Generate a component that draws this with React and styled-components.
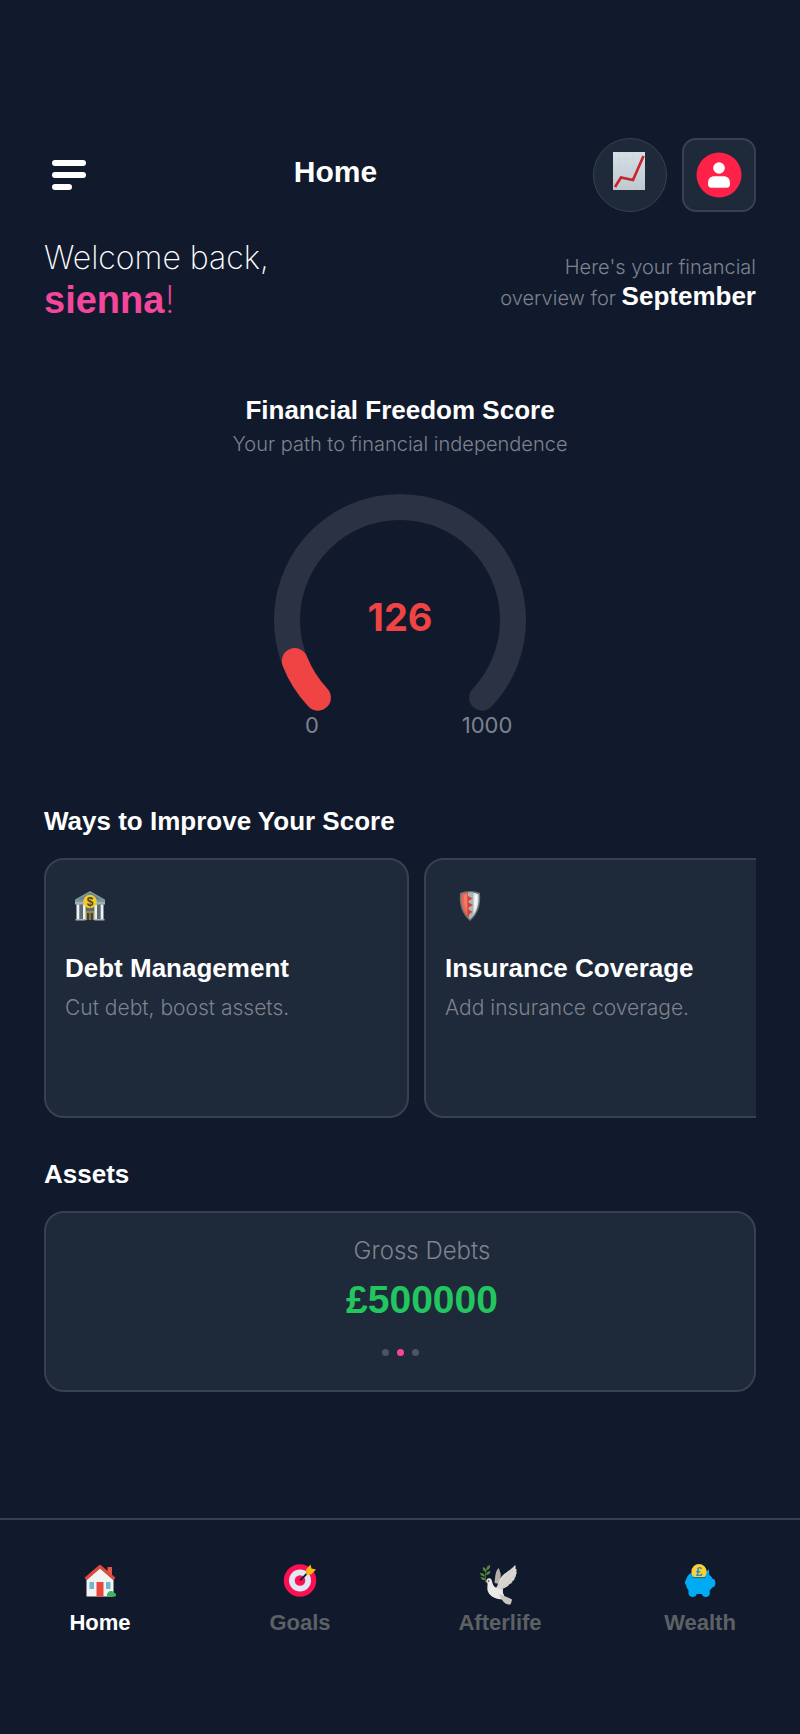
import React from 'react';
import styled, { createGlobalStyle } from 'styled-components';

const navy = '#111a2d';
const panel = '#1e293a';
const line = '#364152';
const textGray = '#7d828e';
const mutedGray = '#5e6163';
const pink = '#f4479b';
const red = '#f04444';
const green = '#22c55e';

const boldFont = "'Liberation Sans', Arial, sans-serif";
const lightFont = "Inter, 'Liberation Sans', sans-serif";

const GlobalStyle = createGlobalStyle`
  * {
    box-sizing: border-box;
  }

  body {
    margin: 0;
    background: ${navy};
    color: #fff;
    font-family: ${boldFont};
  }

  h1, h2, h3, p {
    margin: 0;
  }

  button {
    padding: 0;
    border: none;
    background: none;
    cursor: pointer;
  }
`;

const Page = styled.div`
  display: flex;
  flex-direction: column;
  min-height: 100vh;
`;

const Content = styled.main`
  padding: 138px 44px 40px;
`;

const Header = styled.header`
  display: flex;
  align-items: center;
`;

const MenuButton = styled.button`
  display: flex;
  padding-left: 8px;
`;

const PageTitle = styled.h1`
  flex: 1;
  padding: 0 8px 6px 0;
  font-size: 30px;
  line-height: 34px;
  text-align: center;
`;

const Actions = styled.div`
  display: flex;
  gap: 15px;
`;

const ActionButton = styled.button`
  display: flex;
  align-items: center;
  justify-content: center;
  width: 74px;
  height: 74px;
  border: ${({ $round }) => ($round ? '1px' : '2px')} solid ${line};
  border-radius: ${({ $round }) => ($round ? '50%' : '14px')};
  background: ${panel};
`;

const Welcome = styled.section`
  display: flex;
  align-items: center;
  justify-content: space-between;
  margin-top: 26px;
`;

const Greeting = styled.p`
  font-family: ${lightFont};
  font-size: 32px;
  font-weight: 200;
  line-height: 40px;
`;

const UserName = styled.p`
  font-family: ${lightFont};
  font-size: 38px;
  font-weight: 200;
  line-height: 42px;
  color: ${pink};

  strong {
    font-family: ${boldFont};
    font-weight: 700;
  }
`;

const Overview = styled.p`
  padding-top: 6px;
  font-family: ${lightFont};
  font-size: 20px;
  font-weight: 300;
  line-height: 29px;
  text-align: right;
  color: ${textGray};

  strong {
    font-family: ${boldFont};
    font-size: 26px;
    font-weight: 700;
    color: #fff;
  }
`;

const Score = styled.section`
  display: flex;
  flex-direction: column;
  align-items: center;
  margin-top: 72px;
`;

const Heading = styled.h2`
  font-size: 26px;
  line-height: 34px;
`;

const Subtitle = styled.p`
  margin-bottom: 33px;
  font-family: ${lightFont};
  font-size: 20px;
  font-weight: 300;
  line-height: 34px;
  color: ${textGray};
`;

const GaugeText = styled.text`
  font-family: Inter, sans-serif;
  font-size: 22px;
  text-anchor: middle;
  fill: ${textGray};
`;

const GaugeValue = styled(GaugeText)`
  font-size: 38px;
  font-weight: 700;
  fill: ${red};
`;

const Section = styled.section`
  display: flex;
  flex-direction: column;
  gap: 20px;
  margin-top: ${({ $space }) => $space};
`;

const CardRow = styled.div`
  display: flex;
  gap: 15px;
  overflow: hidden;
`;

const Card = styled.article`
  flex: 0 0 365px;
  min-height: 260px;
  padding: 21px 19px;
  border: 2px solid ${line};
  border-radius: 20px;
  background: ${panel};
`;

const CardIcon = styled.div`
  display: flex;
  align-items: center;
  justify-content: center;
  width: 50px;
  height: 50px;
  margin-bottom: 20px;
`;

const CardTitle = styled.h3`
  font-size: 26px;
  line-height: 34px;
`;

const CardText = styled.p`
  margin-top: 8px;
  font-family: ${lightFont};
  font-size: 21px;
  font-weight: 300;
  line-height: 30px;
  color: ${textGray};
`;

const Totals = styled.div`
  display: flex;
  flex-direction: column;
  align-items: center;
  padding: 21px 0 34px;
  border: 2px solid ${line};
  border-radius: 20px;
  background: ${panel};
`;

const Slide = styled.div`
  align-self: stretch;
  padding-left: 44px;
  text-align: center;
`;

const SlideLabel = styled.p`
  font-family: ${lightFont};
  font-size: 24px;
  font-weight: 300;
  line-height: 34px;
  color: ${textGray};
`;

const SlideValue = styled.p`
  margin-top: 10px;
  font-size: 39px;
  font-weight: 700;
  line-height: 44px;
  color: ${green};
`;

const Dots = styled.div`
  display: flex;
  gap: 8px;
  margin-top: 27px;
`;

const Dot = styled.button`
  width: 7px;
  height: 7px;
  border-radius: 50%;
  background: ${({ $active }) => ($active ? pink : '#4b5566')};
`;

const TabBar = styled.nav`
  display: flex;
  margin-top: auto;
  padding: 43px 0 97px;
  border-top: 2px solid ${line};
`;

const Tab = styled.a`
  display: flex;
  flex: 1;
  flex-direction: column;
  gap: 2px;
  align-items: center;
  font-size: 22px;
  font-weight: 700;
  line-height: 28px;
  text-decoration: none;
  color: ${({ $active }) => ($active ? '#fff' : mutedGray)};
`;

const CoinText = styled.text`
  font-family: ${boldFont};
  font-size: 12px;
  font-weight: 700;
  text-anchor: middle;
  fill: ${({ $fill }) => $fill};
`;

const MenuIcon = () => (
  <svg width="34" height="30" viewBox="0 0 34 30" fill="#fff">
    <rect width="34" height="6" rx="3" />
    <rect y="12" width="34" height="6" rx="3" />
    <rect y="24" width="20" height="6" rx="3" />
  </svg>
);

const ChartIcon = () => (
  <svg width="34" height="46" viewBox="0 0 34 46">
    <defs>
      <linearGradient id="paper" x1="0" y1="0" x2="0" y2="1">
        <stop offset="0" stopColor="#d6dfe6" />
        <stop offset="1" stopColor="#bfc8ce" />
      </linearGradient>
    </defs>
    <rect width="32" height="38" fill="url(#paper)" />
    <path
      d="M6 0v38M13 0v38M20 0v38M27 0v38M0 7h32M0 15h32M0 23h32M0 31h32"
      stroke="#c6d2db"
      opacity="0.4"
    />
    <path d="M2 35 8 25.500 20 28 30.500 4" fill="none" stroke="#c8242c" strokeWidth="2.600" />
  </svg>
);

const UserIcon = () => (
  <svg width="46" height="46" viewBox="0 0 46 46">
    <circle cx="23" cy="23" r="22.500" fill="#ff2147" />
    <circle cx="23" cy="16" r="5.800" fill="#fff" />
    <path d="M12 31.500c0-5 2.500-7.300 6.500-7.300h9c4 0 6.500 2.300 6.500 7.300 0 3-1 4.300-3.500 4.300h-15c-2.500 0-3.500-1.300-3.500-4.300Z" fill="#fff" />
  </svg>
);

const BankIcon = () => (
  <svg width="30" height="30" viewBox="0 0 30 30">
    <path d="M2 12h26v16H2z" fill="#5c6b70" />
    <path d="M15 0 30 8.500v3H0v-3z" fill="#7f959b" />
    <path d="M15 2 26 8.500H4z" fill="#5f7f88" />
    <path d="M0 11h30v2.500H0z" fill="#9eb0b3" />
    <path d="M10.500 20h9v9h-9z" fill="#a08c3c" />
    <path d="M12 22h2.300v7H12zM15.700 22H18v7h-2.300z" fill="#39434a" />
    <path d="M1.500 13.500h2.800V29H1.500zM8 13.500h2.600V29H8zM19.400 13.500H22V29h-2.600zM25.700 13.500h2.800V29h-2.800z" fill="#eef1f2" />
    <path d="M.5 28h10v1.500H.5zM19.500 28h10v1.500h-10z" fill="#a9b3b5" />
    <circle cx="15" cy="10.500" r="6.800" fill="#f5cb2e" />
    <CoinText x="15" y="14.500" $fill="#55481a">
      $
    </CoinText>
  </svg>
);

const ShieldIcon = () => (
  <svg width="22" height="30" viewBox="0 0 22 30">
    <path d="M11 0c3.600 0 7 .7 10 2 1 11.500-1.600 21-10 28C2.600 23 0 13.500 1 2c3-1.300 6.400-2 10-2Z" fill="#6d7478" />
    <path d="M11 1.500V28C4 21.700 1.800 13.300 2.500 3.200 5 2 8 1.500 11 1.500Z" fill="#ee6553" />
    <path d="M11 1.500V28c7-6.300 9.200-14.700 8.500-24.800C17 2 14 1.500 11 1.500Z" fill="#dfe3e5" />
    <path d="M9 1.600v24.500l2 2 3.500-5V1.800z" fill="#aab4ba" />
    <path d="M8.500 1.700 9 5l4.500 2.500L9.500 10v1.500l4.500 2.500-4.500 2.500v2l4 2.300-3.500 2.600v3L8.500 25z" fill="#d4422c" />
    <path d="M5 4c-.3 6 .5 12 3 16.500V3z" fill="#f58c7b" opacity="0.6" />
    <path d="M15.500 3.500v17c2-4.500 2.800-10 2.500-16z" fill="#fff" opacity="0.7" />
  </svg>
);

const HouseIcon = () => (
  <svg width="44" height="44" viewBox="0 0 44 44">
    <path d="M29.500 4H34v12l-4.500-5z" fill="#e2574c" />
    <path d="M8.500 17 22 5l13.500 12v16.500h-27z" fill="#f2f3f3" />
    <path d="M7.500 16 22 3.500 36.500 16" fill="none" stroke="#e2493c" strokeWidth="3" strokeLinejoin="round" />
    <path d="M18.500 19h7v14.500h-7z" fill="#e9473c" />
    <path d="M11.500 19h4.500v7h-4.500zM28 19h4.500v7H28z" fill="#6fb6ce" />
    <path d="M29.500 33.500a3 3 0 0 1 .5-4 4 4 0 0 1 6.500.5c1.800.4 2 2.500 1 3.500z" fill="#3cb563" />
  </svg>
);

const TargetIcon = () => (
  <svg width="44" height="44" viewBox="0 0 44 44">
    <circle cx="22" cy="17.500" r="16.200" fill="#fb1152" />
    <circle cx="22" cy="17.500" r="11" fill="#dfe8f4" />
    <circle cx="22" cy="17.500" r="5.300" fill="#fb1152" />
    <path d="M22 17.500 31 8.500" stroke="#14203a" strokeWidth="1.800" />
    <path d="m28 6.500 4.500-5 1 4 4.500 1-4.500 4.800-5 .7z" fill="#ffb70f" />
  </svg>
);

const DoveIcon = () => (
  <svg width="44" height="44" viewBox="0 0 44 44">
    <path d="M16.500 20C17.500 13 17 9 20.500 5c1 1.500 1.200 2.500 1.500 4 1 2 1 3 .5 5l-1 7z" fill="#b3b0aa" />
    <path
      d="M18 25c3-4 2.500-9 6.500-12.500C29 8.500 33 7 37 2c1 1.300.7 2.700.2 3.700 1.500-.2 1.800 1.300.9 2.900 1 .4.700 2-.2 3 .4 1-.2 2.200-1.200 3.200.1 1.700-1 2.700-2.200 3.200-.2 1.700-1.500 2.700-3 3-.8 2.400-3.800 3.400-6.500 4.400C25 28 25.500 31 22 33z"
      fill="#dbd8d4"
    />
    <path d="M21 23 35 7M23 25l14-13M24 26l10-8" stroke="#c2bfb9" strokeWidth="0.600" />
    <path
      d="M8.500 17.500c.5-2.700 3.700-3 5-.8 1 2 .8 5 3 7C20 26 24.500 26 25 30c2 3.500 1 5 0 6.500C17 36.500 9 32 9.300 25c.2-2.500.5-4-.1-5.500L7.500 19z"
      fill="#eceae6"
    />
    <path d="M21 31c4 1.500 9.500 3.500 13 5.500-.5 2-.7 3.500-1.500 5-3.500.5-6.500-1-9-5.500z" fill="#c9c6c0" />
    <circle cx="10.500" cy="18" r="0.800" fill="#25272b" />
    <path d="M8 19C7 13 7 9 10 3" fill="none" stroke="#4f7d35" strokeWidth="0.900" />
    <path
      d="M8 9C5 8 4.500 6 5 4c2.500 1 3.500 2.500 3 5zM9 7c-.5-2.500.5-4.500 3-5 .5 2.500-.5 4.500-3 5zM8 12c.5-3 2-4 4.500-4-.2 2.500-2 4-4.500 4zM7 13.500c-3 0-4.500-1.500-5-3.500 2.800 0 4.500 1 5 3.500zM7.500 17c-2.500.5-4-.5-5-2.500 2.500-.5 4.300.3 5 2.500z"
      fill="#558b38"
    />
  </svg>
);

const PiggyIcon = () => (
  <svg width="44" height="44" viewBox="0 0 44 44">
    <path
      d="M14 9.500h12.500L31 6.500v5c1.700 1.200 2.800 2.500 3.500 4.200 1.700 0 2.900 1.400 2.900 4.300s-1.200 4.300-3.200 4.500c-.6 1.200-1.400 2-2.400 2.800v3c0 4.800-7.300 4.800-8 .7h-5c-.8 4.100-8.300 4-8.300-.7v-3c-1.400-1.600-2.200-3.300-2.400-5.300C6.500 20.500 6.500 18.500 8 17c.6-3.300 2.800-6 6-7.500z"
      fill="#00abf3"
    />
    <path d="M14.500 14.500h13" stroke="#0874ae" strokeWidth="1.400" />
    <path d="M15.600 14a7.600 7.600 0 1 1 10.800 0z" fill="#ffcf37" />
    <CoinText x="21" y="13" $fill="#2793b8">
      £
    </CoinText>
  </svg>
);

// The dial opens at the bottom and sweeps 280 degrees, rounded ends included
const SWEEP = 280;
const RADIUS = 113;
const THICKNESS = 26;
const CENTER = 126;
const CAP = (Math.asin(THICKNESS / 2 / RADIUS) * 180) / Math.PI;

const pointAt = degrees => {
  const angle = (degrees * Math.PI) / 180;
  return `${CENTER + RADIUS * Math.sin(angle)} ${CENTER - RADIUS * Math.cos(angle)}`;
};

const arc = portion => {
  const start = -SWEEP / 2 + CAP;
  const end = -SWEEP / 2 + SWEEP * portion - CAP;
  const large = end - start > 180 ? 1 : 0;
  return `M${pointAt(start)}A${RADIUS} ${RADIUS} 0 ${large} 1 ${pointAt(end)}`;
};

const Gauge = ({ value, max }) => (
  <svg width="252" height="244" viewBox="0 0 252 244" role="img" aria-label={`${value} of ${max}`}>
    <g fill="none" strokeWidth={THICKNESS} strokeLinecap="round">
      <path d={arc(1)} stroke="#2a3244" />
      <path d={arc(value / max)} stroke={red} />
    </g>
    <GaugeValue x={CENTER} y="137">
      {value}
    </GaugeValue>
    <GaugeText x="38" y="239">
      0
    </GaugeText>
    <GaugeText x="213" y="239">
      {max}
    </GaugeText>
  </svg>
);

const tips = [
  { title: 'Debt Management', text: 'Cut debt, boost assets.', Icon: BankIcon },
  { title: 'Insurance Coverage', text: 'Add insurance coverage.', Icon: ShieldIcon },
];

const tabs = [
  { name: 'Home', Icon: HouseIcon },
  { name: 'Goals', Icon: TargetIcon },
  { name: 'Afterlife', Icon: DoveIcon },
  { name: 'Wealth', Icon: PiggyIcon },
];

const App = () => (
  <Page>
    <GlobalStyle />
    <Content>
      <Header>
        <MenuButton aria-label="Menu">
          <MenuIcon />
        </MenuButton>
        <PageTitle>Home</PageTitle>
        <Actions>
          <ActionButton $round aria-label="Reports">
            <ChartIcon />
          </ActionButton>
          <ActionButton aria-label="Profile">
            <UserIcon />
          </ActionButton>
        </Actions>
      </Header>

      <Welcome>
        <div>
          <Greeting>Welcome back,</Greeting>
          <UserName>
            <strong>sienna</strong>!
          </UserName>
        </div>
        <Overview>
          Here's your financial
          <br />
          overview for <strong>September</strong>
        </Overview>
      </Welcome>

      <Score>
        <Heading>Financial Freedom Score</Heading>
        <Subtitle>Your path to financial independence</Subtitle>
        <Gauge value={126} max={1000} />
      </Score>

      <Section $space="66px">
        <Heading>Ways to Improve Your Score</Heading>
        <CardRow>
          {tips.map(({ title, text, Icon }) => (
            <Card key={title}>
              <CardIcon>
                <Icon />
              </CardIcon>
              <CardTitle>{title}</CardTitle>
              <CardText>{text}</CardText>
            </Card>
          ))}
        </CardRow>
      </Section>

      <Section $space="39px">
        <Heading>Assets</Heading>
        <Totals>
          <Slide>
            <SlideLabel>Gross Debts</SlideLabel>
            <SlideValue>£500000</SlideValue>
          </Slide>
          <Dots>
            <Dot aria-label="Slide 1" />
            <Dot $active aria-label="Slide 2" />
            <Dot aria-label="Slide 3" />
          </Dots>
        </Totals>
      </Section>
    </Content>

    <TabBar>
      {tabs.map(({ name, Icon }) => (
        <Tab key={name} href={`#${name.toLowerCase()}`} $active={name === 'Home'}>
          <Icon />
          {name}
        </Tab>
      ))}
    </TabBar>
  </Page>
);

export default App;
